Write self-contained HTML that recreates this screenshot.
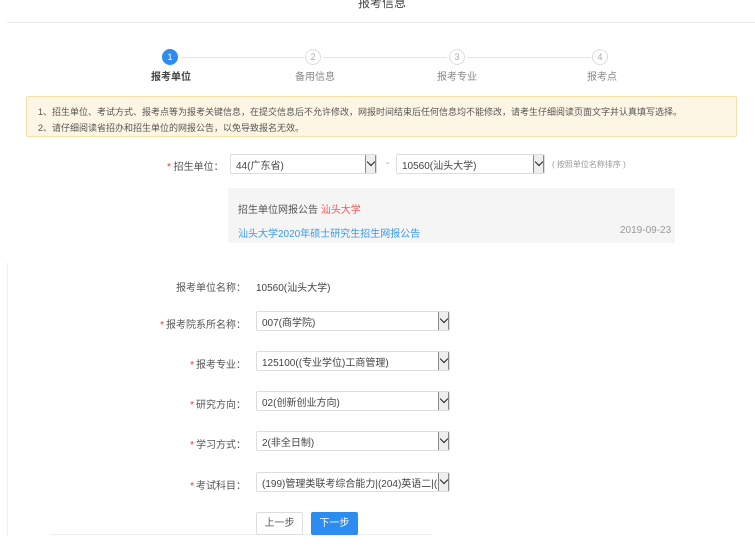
<!DOCTYPE html>
<html><head><meta charset="utf-8"><style>
*{margin:0;padding:0;box-sizing:border-box}
body{width:755px;height:547px;position:relative;background:#fff;font-family:"Liberation Sans","Noto Sans CJK SC",sans-serif;color:#555;overflow:hidden;font-size:10px}
.a{position:absolute;white-space:nowrap}
.c{position:absolute;width:16px;height:16px;border-radius:50%;border:1px solid #ddd;color:#aaa;font-size:9px;text-align:center;line-height:14px;background:#fff}
.ln{position:absolute;height:1px;background:#e5e5e5;top:57px}
.sel{position:absolute;height:20px;border:1px solid #ddd;border-radius:2px;background:#fff;font-size:10px;padding-left:5px;color:#444;display:flex;align-items:center;white-space:nowrap;overflow:hidden}
.sel i{position:absolute;right:0;top:0;width:11px;height:18px;border-left:1px solid #888;border-right:1px solid #888;background:#eee;font-style:normal}
.sel i:after{content:"";position:absolute;left:2px;top:4px;width:5px;height:5px;border-right:1.5px solid #222;border-bottom:1.5px solid #222;transform:rotate(45deg)}
.lb{position:absolute;text-align:right;width:120px;font-size:10px;color:#555}
.lb b{color:#e33;font-weight:normal;margin-right:2px}
</style></head><body>
<div class="a" style="left:358px;top:-6px;font-size:12px;color:#444">报考信息</div>
<div class="a" style="left:7px;top:22px;width:748px;height:1px;background:#ebebeb"></div>
<div class="ln" style="left:180px;width:124px"></div>
<div class="ln" style="left:323px;width:124px"></div>
<div class="ln" style="left:467px;width:124px"></div>
<div class="c" style="left:162px;top:49px;background:#2d8cf0;border-color:#2d8cf0;color:#fff">1</div>
<div class="c" style="left:305px;top:49px">2</div>
<div class="c" style="left:449px;top:49px">3</div>
<div class="c" style="left:592px;top:49px">4</div>
<div class="a" style="left:151px;top:68px;color:#444;font-weight:bold">报考单位</div>
<div class="a" style="left:295px;top:68px;color:#888">备用信息</div>
<div class="a" style="left:437px;top:68px;color:#888">报考专业</div>
<div class="a" style="left:587px;top:68px;color:#888">报考点</div>
<div class="a" style="left:26px;top:96px;width:711px;height:41px;background:#fdf6e4;border:1px solid #f6e0a8;border-radius:2px;font-size:9px;color:#555;padding:7px 11px;line-height:16px">1、招生单位、考试方式、报考点等为报考关键信息，在提交信息后不允许修改，网报时间结束后任何信息均不能修改，请考生仔细阅读页面文字并认真填写选择。<br>2、请仔细阅读省招办和招生单位的网报公告，以免导致报名无效。</div>
<div class="a" style="left:167px;top:158px;font-size:10px"><b style="color:#e33;font-weight:normal">*</b> 招生单位：</div>
<div class="sel" style="left:230px;top:154px;width:147px">44(广东省)<i></i></div>
<div class="a" style="left:386px;top:158px;color:#999">-</div>
<div class="sel" style="left:396px;top:154px;width:149px">10560(汕头大学)<i></i></div>
<div class="a" style="left:552px;top:159px;font-size:8px;color:#999">( 按照单位名称排序 )</div>
<div class="a" style="left:228px;top:188px;width:447px;height:55px;background:#f5f5f5"></div>
<div class="a" style="left:238px;top:201px;color:#555">招生单位网报公告 <span style="color:#f55">汕头大学</span></div>
<div class="a" style="left:238px;top:225px;color:#3a9ae8">汕头大学2020年硕士研究生招生网报公告</div>
<div class="a" style="left:620px;top:225px;color:#999">2019-09-23</div>
<div class="a" style="left:7px;top:263px;width:1px;height:272px;background:#eee"></div>
<div class="a" style="left:50px;top:534px;width:382px;height:1px;background:#eee"></div>
<div class="lb" style="left:126px;top:279px">报考单位名称：</div>
<div class="a" style="left:256px;top:279px;color:#444">10560(汕头大学)</div>
<div class="lb" style="left:126px;top:316px"><b>*</b>报考院系所名称：</div>
<div class="sel" style="left:256px;top:311px;width:194px">007(商学院)<i></i></div>
<div class="lb" style="left:126px;top:356px"><b>*</b>报考专业：</div>
<div class="sel" style="left:256px;top:351px;width:194px">125100((专业学位)工商管理)<i></i></div>
<div class="lb" style="left:126px;top:396px"><b>*</b>研究方向：</div>
<div class="sel" style="left:256px;top:391px;width:194px">02(创新创业方向)<i></i></div>
<div class="lb" style="left:126px;top:436px"><b>*</b>学习方式：</div>
<div class="sel" style="left:256px;top:431px;width:194px">2(非全日制)<i></i></div>
<div class="lb" style="left:126px;top:477px"><b>*</b>考试科目：</div>
<div class="sel" style="left:256px;top:472px;width:194px">(199)管理类联考综合能力|(204)英语二|(-)无<i></i></div>
<div class="a" style="left:256px;top:512px;width:47px;height:23px;border:1px solid #ddd;border-radius:2px;text-align:center;line-height:21px;color:#555">上一步</div>
<div class="a" style="left:311px;top:512px;width:47px;height:23px;background:#2d8cf0;border-radius:2px;text-align:center;line-height:23px;color:#fff">下一步</div>
</body></html>
